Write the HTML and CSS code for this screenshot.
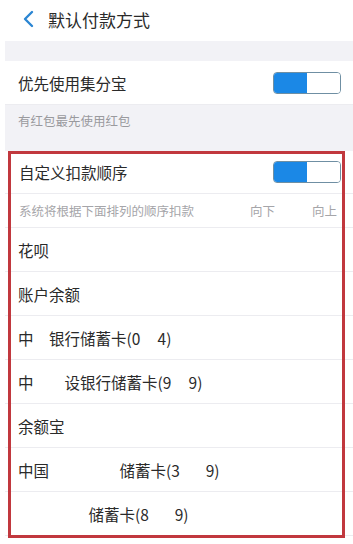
FILE: index.html
```html
<!DOCTYPE html>
<html lang="zh-CN">
<head>
<meta charset="utf-8">
<title>默认付款方式</title>
<link rel="stylesheet" href="styles.css">
</head>
<body>
<div class="page">
  <header class="topbar">
    <svg class="back" width="14" height="18" viewBox="0 0 14 18"><path d="M11 2 L4 9 L11 16" fill="none" stroke="#2b86d3" stroke-width="2.4" stroke-linecap="round" stroke-linejoin="round"/></svg>
    <h1 class="title">默认付款方式</h1>
  </header>
  <div class="band"></div>
  <div class="row">
    <span class="label">优先使用集分宝</span>
    <span class="toggle"><span class="on"></span><span class="off"></span></span>
  </div>
  <div class="hint">有红包最先使用红包</div>
  <section class="custom">
    <div class="row first">
      <span class="label">自定义扣款顺序</span>
      <span class="toggle"><span class="on"></span><span class="off"></span></span>
    </div>
    <div class="subrow">
      <span class="note">系统将根据下面排列的顺序扣款</span>
      <span class="actions"><span>向下</span><span>向上</span></span>
    </div>
    <div class="row"><span class="label">花呗</span></div>
    <div class="row"><span class="label">账户余额</span></div>
    <div class="row"><span class="label">中　银行储蓄卡(0&#8199;&#8199;4)</span></div>
    <div class="row"><span class="label">中　　设银行储蓄卡(9&#8199;&#8199;9)</span></div>
    <div class="row"><span class="label">余额宝</span></div>
    <div class="row"><span class="label">中国　　　　&#8199;储蓄卡(3&#8199;&#8199;&#8199;9)</span></div>
    <div class="row"><span class="label">　　　　&#8199;储蓄卡(8&#8199;&#8199;&#8199;9)</span></div>
    <div class="annot"></div>
  </section>
</div>
</body>
</html>
```
FILE: styles.css
```css
* { box-sizing: border-box; }
html, body { margin: 0; padding: 0; background: #fff; }
body {
  font-family: "Noto Sans CJK SC", "Noto Sans", sans-serif;
  color: #2a2a2a;
  width: 353px;
  height: 544px;
  overflow: hidden;
}
.page { margin-left: 5px; }
.topbar {
  height: 41px;
  display: flex;
  align-items: center;
  padding: 0 0 3px 16px;
  background: #fff;
}
.title {
  margin: 0 0 0 13px;
  font-size: 17px;
  font-weight: 400;
  color: #2a2a2a;
  line-height: 1;
}
.band { height: 20px; background: #f2f2f6; }
.row {
  height: 44px;
  display: flex;
  align-items: center;
  justify-content: space-between;
  padding: 0 12px 0 13px;
  background: #fff;
  border-bottom: 1px solid #ececf0;
}
.label { font-size: 15.5px; white-space: pre; color: #2a2a2a; }
.toggle {
  display: flex;
  width: 68px;
  height: 22px;
  border-radius: 4px;
  overflow: hidden;
  border: 1px solid #6f8fa3;
}
.toggle .on { width: 33px; background: #1b88e6; }
.toggle .off { flex: 1; background: #fff; }
.hint {
  height: 46px;
  background: #f2f2f6;
  padding: 6px 0 0 13px;
  font-size: 12.5px;
  color: #9a9a9e;
}
.custom { position: relative; }
.custom .row.first { height: 43px; padding-left: 14px; }
.subrow {
  height: 34px;
  display: flex;
  align-items: center;
  justify-content: space-between;
  padding: 0 16px 0 14px;
  border-bottom: 1px solid #ececf0;
  font-size: 12.5px;
  color: #a5a5a9;
}
.actions { display: flex; gap: 37px; }
.annot {
  position: absolute;
  left: 3px;
  top: 0;
  width: 337px;
  height: 387px;
  border: 3px solid #c1383e;
  pointer-events: none;
}
```
